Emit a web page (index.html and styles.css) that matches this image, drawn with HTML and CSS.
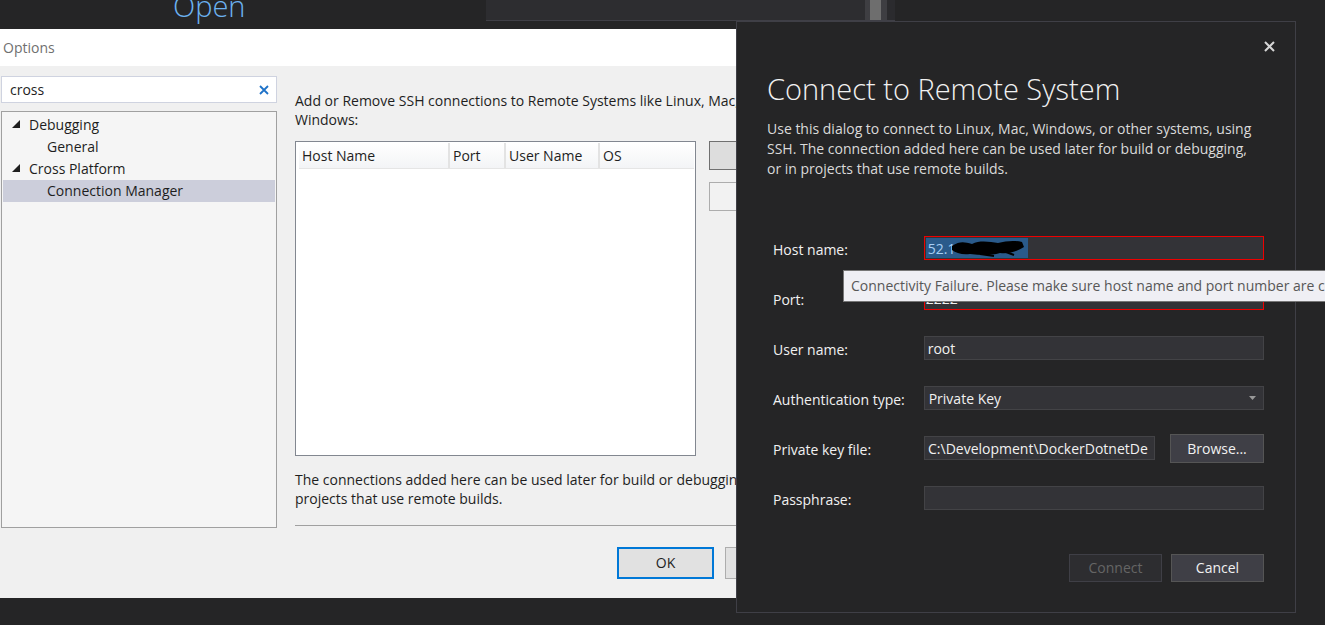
FILE: index.html
```html
<!DOCTYPE html>
<html>
<head>
<meta charset="utf-8">
<link rel="stylesheet" href="styles.css">
</head>
<body>
<div class="backdrop">
  <div class="bd-left"><span class="bd-open">Open</span></div>
  <div class="bd-mid"></div>
  <div class="bd-scroll"><div class="bd-thumb"></div></div>
  <div class="bd-right"></div>
</div>

<div class="options">
  <div class="opt-title">Options</div>
  <div class="opt-body">
    <div class="opt-left">
      <div class="search">
        <span class="search-text">cross</span>
        <svg class="search-x" width="10" height="10" viewBox="0 0 10 10"><path d="M1 1L9 9M9 1L1 9" stroke="#1e72c8" stroke-width="1.8"/></svg>
      </div>
      <div class="tree">
        <div class="tree-row lvl1"><svg class="tri" width="8" height="8" viewBox="0 0 8 8"><polygon points="8,0 8,8 0,8" fill="#1e1e1e"/></svg>Debugging</div>
        <div class="tree-row lvl2">General</div>
        <div class="tree-row lvl1"><svg class="tri" width="8" height="8" viewBox="0 0 8 8"><polygon points="8,0 8,8 0,8" fill="#1e1e1e"/></svg>Cross Platform</div>
        <div class="tree-row lvl2 selected">Connection Manager</div>
      </div>
    </div>
    <div class="opt-right">
      <p class="opt-text">Add or Remove SSH connections to Remote Systems like Linux, Mac, or<br>Windows:</p>
      <div class="list-row">
        <div class="listview">
          <div class="lv-header">
            <div class="lv-col c1">Host Name</div>
            <div class="lv-col c2">Port</div>
            <div class="lv-col c3">User Name</div>
            <div class="lv-col c4">OS</div>
          </div>
        </div>
        <div class="side-buttons">
          <div class="side-btn primary">Add</div>
          <div class="side-btn">Remove</div>
        </div>
      </div>
      <p class="opt-text bottom">The connections added here can be used later for build or debugging, or in<br>projects that use remote builds.</p>
      <div class="sep"></div>
      <div class="opt-footer">
        <div class="btn ok">OK</div>
        <div class="btn">Cancel</div>
      </div>
    </div>
  </div>
</div>

<div class="connect">
  <div class="cr-top">
    <svg class="cr-close" width="11" height="11" viewBox="0 0 11 11"><path d="M1 1L10 10M10 1L1 10" stroke="#d6d6d6" stroke-width="2"/></svg>
  </div>
  <h1 class="cr-title">Connect to Remote System</h1>
  <p class="cr-desc">Use this dialog to connect to Linux, Mac, Windows, or other systems, using SSH. The connection added here can be used later for build or debugging, or in projects that use remote builds.</p>
  <div class="cr-form">
    <div class="cr-row">
      <label class="cr-label">Host name:</label>
      <div class="cr-input error">
        <span class="sel">52.1<svg class="redact" width="76" height="20" viewBox="0 0 76 20"><path d="M2 8 C10 3 14 4 22 6 C30 2 40 4 48 5 C56 3 64 2 72 4 L74 9 C66 14 58 16 50 15 C40 18 30 17 20 16 C12 17 6 15 2 12 Z" fill="#000"/><path d="M30 16 L44 18 M56 14 L64 17" stroke="#000" stroke-width="2"/></svg></span>
      </div>
    </div>
    <div class="cr-row">
      <label class="cr-label">Port:</label>
      <div class="cr-input error"><span class="val">2222</span></div>
    </div>
    <div class="cr-row">
      <label class="cr-label">User name:</label>
      <div class="cr-input"><span class="val">root</span></div>
    </div>
    <div class="cr-row">
      <label class="cr-label">Authentication type:</label>
      <div class="cr-input select"><span class="val">Private Key</span><svg class="caret" width="7" height="4" viewBox="0 0 7 4"><polygon points="0,0 7,0 3.5,4" fill="#999"/></svg></div>
    </div>
    <div class="cr-row">
      <label class="cr-label">Private key file:</label>
      <div class="cr-input short"><span class="val">C:\Development\DockerDotnetDe</span></div>
      <div class="cr-browse">Browse...</div>
    </div>
    <div class="cr-row">
      <label class="cr-label">Passphrase:</label>
      <div class="cr-input"></div>
    </div>
  </div>
  <div class="cr-footer">
    <div class="cr-btn disabled">Connect</div>
    <div class="cr-btn">Cancel</div>
  </div>
</div>

<div class="tooltip">Connectivity Failure. Please make sure host name and port number are correct.</div>
</body>
</html>
```

FILE: styles.css
```css
* { box-sizing: border-box; }
html, body {
  margin: 0;
  padding: 0;
  width: 1325px;
  height: 625px;
  overflow: hidden;
  background: #252526;
  font-family: "Open Sans", "Noto Sans", sans-serif;
  font-size: 14px;
  color: #1e1e1e;
}
body { position: relative; }
p { margin: 0; }
h1 { margin: 0; font-weight: 300; }

/* backdrop app */
.backdrop {
  display: flex;
  height: 29px;
  align-items: flex-start;
}
.bd-left {
  width: 486px;
  height: 29px;
  padding-left: 173px;
  overflow: hidden;
}
.bd-open {
  display: block;
  margin-top: -12px;
  font-size: 29px;
  font-weight: 300;
  color: #6cb2f0;
  line-height: 36px;
}
.bd-mid {
  width: 379px;
  height: 21px;
  background: #2d2d30;
  border-bottom: 1px solid #3f3f46;
}
.bd-scroll {
  width: 22px;
  height: 21px;
  background: #3e3e42;
  padding-left: 5px;
  border-bottom: 1px solid #3f3f46;
}
.bd-thumb {
  width: 11px;
  height: 20px;
  background: #6e6e6e;
}
.bd-right {
  width: 8px;
  height: 21px;
  background: #2b2b2e;
  border-bottom: 1px solid #3f3f46;
}

/* Options window */
.options {
  position: absolute;
  left: 0;
  top: 29px;
  width: 834px;
  height: 569px;
  background: #f0f0f0;
}
.opt-title {
  height: 37px;
  background: #ffffff;
  padding-left: 3px;
  line-height: 37px;
  font-size: 14px;
  color: #707070;
}
.opt-body {
  display: flex;
  padding: 10px 12px 0 1px;
}
.opt-left {
  width: 276px;
  display: flex;
  flex-direction: column;
  gap: 8px;
}
.search {
  height: 27px;
  background: #fff;
  border: 1px solid #cfd3e0;
  display: flex;
  align-items: center;
  justify-content: space-between;
  padding: 0 7px 0 8px;
}
.search-text { color: #1e1e1e; }
.tree {
  height: 417px;
  background: #f5f5f5;
  border: 1px solid #a0a0a0;
  padding: 2px 1px;
}
.tree-row {
  height: 22px;
  line-height: 22px;
  display: flex;
  align-items: center;
  white-space: nowrap;
}
.tree-row.lvl1 { padding-left: 9px; }
.tree-row.lvl2 { padding-left: 44px; }
.tri { margin-right: 9px; margin-top: -2px; }
.tree-row.selected { background: #cccedb; }

.opt-right {
  flex: 1;
  margin-left: 18px;
  padding-top: 15px;
}
.opt-text {
  line-height: 19px;
  white-space: nowrap;
}
.list-row {
  display: flex;
  margin-top: 12px;
  gap: 13px;
}
.listview {
  width: 401px;
  height: 315px;
  background: #fff;
  border: 1px solid #828790;
  padding: 1px 1px 0 3px;
}
.lv-header {
  display: flex;
  height: 26px;
  background: linear-gradient(#ffffff, #f3f4f6);
  border-bottom: 1px solid #e5e5e5;
}
.lv-col {
  line-height: 25px;
  padding-left: 3px;
  border-right: 2px solid #e3e3e3;
  white-space: nowrap;
}
.c1 { width: 151px; }
.c2 { width: 56px; }
.c3 { width: 94px; }
.c4 { flex: 1; border-right: none; }
.side-buttons {
  display: flex;
  flex-direction: column;
  gap: 12px;
}
.side-btn {
  width: 110px;
  height: 29px;
  border: 1px solid #adadad;
  background: #f2f2f2;
  text-align: center;
  line-height: 27px;
}
.side-btn.primary {
  background: #dddddd;
  border-color: #707070;
}
.opt-text.bottom { margin-top: 14px; }
.sep {
  height: 1px;
  background: #a0a0a0;
  margin-top: 17px;
}
.opt-footer {
  display: flex;
  justify-content: flex-end;
  gap: 11px;
  margin-top: 21px;
}
.btn {
  width: 97px;
  height: 32px;
  border: 1px solid #adadad;
  background: #e1e1e1;
  text-align: center;
  line-height: 30px;
}
.btn.ok {
  border: 2px solid #0078d7;
  line-height: 28px;
}

/* Connect dialog */
.connect {
  position: absolute;
  left: 736px;
  top: 21px;
  width: 560px;
  height: 592px;
  background: #252526;
  border: 1px solid #3f3f46;
  padding: 0 31px 30px 30px;
  display: flex;
  flex-direction: column;
  color: #f1f1f1;
}
.cr-top {
  display: flex;
  justify-content: flex-end;
  height: 48px;
  padding-top: 19px;
  margin-right: -11px;
}
.cr-title {
  font-size: 29px;
  line-height: 38px;
  color: #f1f1f1;
  white-space: nowrap;
}
.cr-desc {
  margin-top: 11px;
  line-height: 20px;
  color: #dadada;
  width: 490px;
}
.cr-form {
  margin-top: 57px;
  margin-left: 6px;
  display: flex;
  flex-direction: column;
  gap: 26px;
}
.cr-row {
  display: flex;
  align-items: center;
  height: 24px;
}
.cr-label {
  width: 151px;
  color: #f1f1f1;
  white-space: nowrap;
  padding-top: 2px;
}
.cr-input {
  width: 341px;
  height: 24px;
  background: #333337;
  border: 1px solid #434346;
  display: flex;
  align-items: center;
  padding-left: 3px;
  overflow: hidden;
  white-space: nowrap;
}
.cr-input.error { border-color: #ee0000; padding-left: 1px; }
.cr-input .val { color: #f1f1f1; }
.sel {
  display: flex;
  align-items: center;
  height: 20px;
  background: #2a5a8a;
  color: #a8d0f5;
  padding-left: 2px;
  padding-right: 2px;
}
.redact { margin-left: -5px; }
.cr-input.select {
  justify-content: space-between;
  padding-left: 4px;
  padding-right: 7px;
}
.cr-input.short { width: 231px; }
.cr-browse {
  width: 94px;
  height: 29px;
  margin-left: 15px;
  background: #3f3f46;
  border: 1px solid #555555;
  text-align: center;
  line-height: 27px;
  color: #f1f1f1;
}
.cr-footer {
  margin-top: auto;
  display: flex;
  justify-content: flex-end;
  gap: 9px;
}
.cr-btn {
  width: 93px;
  height: 28px;
  background: #3f3f46;
  border: 1px solid #555555;
  text-align: center;
  line-height: 26px;
  color: #f1f1f1;
}
.cr-btn.disabled {
  background: #2d2d30;
  border-color: #3f3f46;
  color: #656565;
}

/* tooltip */
.tooltip {
  position: absolute;
  left: 843px;
  top: 270px;
  height: 32px;
  padding: 0 8px 0 7px;
  line-height: 30px;
  background: #efeff4;
  border: 1px solid #767676;
  color: #575757;
  white-space: nowrap;
  font-size: 14px;
}
```
